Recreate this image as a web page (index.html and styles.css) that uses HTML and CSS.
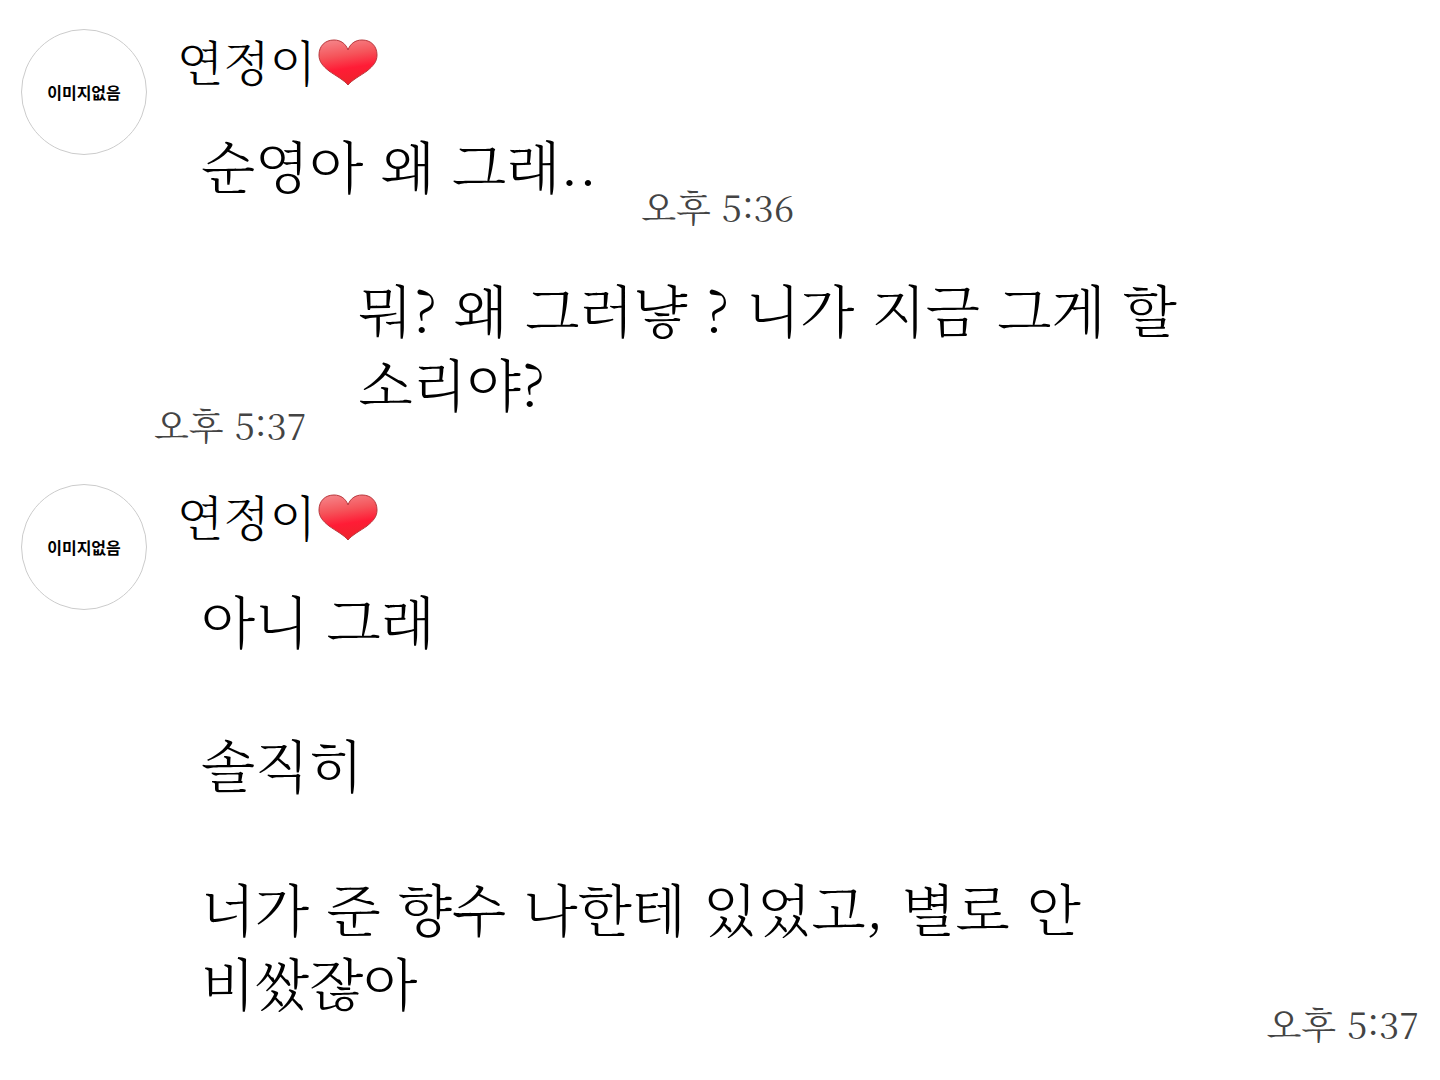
FILE: index.html
```html
<!DOCTYPE html>
<html lang="ko">
<head>
<meta charset="utf-8">
<meta name="viewport" content="width=device-width, initial-scale=1">
<title>연정이</title>
<link rel="stylesheet" href="styles.css">
</head>
<body>
<svg class="defs" width="0" height="0" aria-hidden="true">
  <defs>
    <linearGradient id="heart-fill" x1="0" y1="0" x2="0.2" y2="1">
      <stop offset="0" stop-color="#f58a8e"/>
      <stop offset="0.4" stop-color="#f5545a"/>
      <stop offset="0.7" stop-color="#ff1c36"/>
      <stop offset="1" stop-color="#f0222c"/>
    </linearGradient>
    <symbol id="heart" viewBox="0 0 60 48">
      <path d="M30 46C26 41 18 37 11 32C5 27 1 23 1 16C1 7 7 1 16 1C23 1 28 5 30 11C32 5 37 1 44 1C53 1 59 7 59 16C59 23 55 27 49 32C42 37 34 41 30 46Z" fill="url(#heart-fill)" stroke="#b8373c"/>
    </symbol>
  </defs>
</svg>
<main class="chat">
  <section class="group">
    <div class="avatar">이미지없음</div>
    <div class="body">
      <h2 class="name">연정이<svg class="heart" role="img" aria-label="하트"><use href="#heart"/></svg></h2>
      <div class="row">
        <p class="text">순영아 왜 그래..</p>
        <time class="time">오후 5:36</time>
      </div>
    </div>
  </section>
  <section class="row mine">
    <time class="time">오후 5:37</time>
    <p class="text">뭐? 왜 그러냫 ? 니가 지금 그게 할<br>소리야?</p>
  </section>
  <section class="group">
    <div class="avatar">이미지없음</div>
    <div class="body">
      <h2 class="name">연정이<svg class="heart" role="img" aria-label="하트"><use href="#heart"/></svg></h2>
      <p class="text">아니 그래</p>
      <p class="text">솔직히</p>
      <div class="row spread">
        <p class="text">너가 준 향수 나한테 있었고, 별로 안<br>비쌌잖아</p>
        <time class="time">오후 5:37</time>
      </div>
    </div>
  </section>
</main>
</body>
</html>
```
FILE: styles.css
```css
body {
  margin: 0;
  background: #fff;
  color: #000;
  font-family: "Noto Serif CJK KR", "Noto Sans CJK KR", serif;
}

.defs {
  display: block;
}

.chat {
  padding: 29px 21px;
}

.group {
  display: flex;
  gap: 30px;
}

.avatar {
  flex: none;
  display: flex;
  align-items: center;
  justify-content: center;
  width: 124px;
  height: 124px;
  border: 1px solid #ccc;
  border-radius: 50%;
  font-family: "Noto Sans CJK KR", sans-serif;
  font-size: 16px;
  font-weight: 700;
}

.body {
  flex: 1;
}

.name {
  display: flex;
  align-items: flex-end;
  gap: 2px;
  margin: 0;
  font-size: 48px;
  font-weight: 300;
  line-height: 64px;
}

.heart {
  width: 60px;
  height: 48px;
  margin-bottom: 6px;
}

.text {
  margin: 0;
  padding: 34px 24px 36px;
  font-size: 56px;
  font-weight: 300;
  line-height: 74px;
}

.row {
  display: flex;
  align-items: flex-end;
}

.time {
  padding: 6px 28px 6px 20px;
  color: #444;
  font-size: 36px;
  font-weight: 400;
  line-height: 48px;
  white-space: nowrap;
}

.spread {
  justify-content: space-between;
}

.spread .time {
  padding-right: 0;
}

.mine {
  margin-bottom: 29px;
  padding-left: 113px;
}
```
